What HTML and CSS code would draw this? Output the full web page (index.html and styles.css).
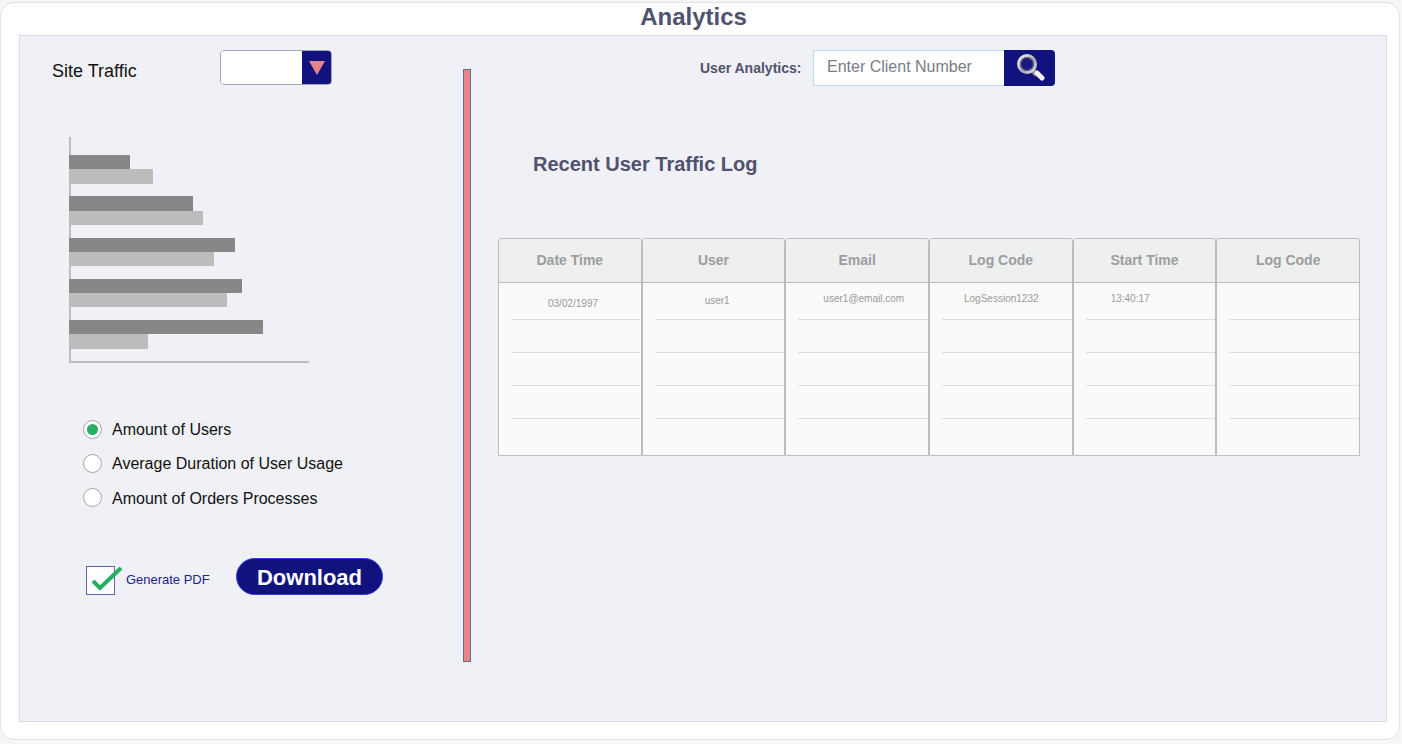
FILE: index.html
```html
<!DOCTYPE html>
<html lang="en">
<head>
    <meta charset="UTF-8">
    <meta name="viewport" content="width=device-width, initial-scale=1.0">
    <title>Analytics</title>
    <link rel="stylesheet" href="styles.css">
</head>

<body>
    <div class="card">
        <h1 class="page_title">Analytics</h1>
        <div class="panel">

            <div class="left_col">
                <div class="traffic_row">
                    <span class="traffic_label">Site Traffic</span>
                    <div class="dropdown">
                        <div class="dropdown_value"></div>
                        <div class="dropdown_arrow"><span class="triangle"></span></div>
                    </div>
                </div>

                <div class="chart">
                    <div class="bar_group">
                        <div class="bar bar_dark" style="width: 61px"></div>
                        <div class="bar bar_light" style="width: 84px"></div>
                    </div>
                    <div class="bar_group">
                        <div class="bar bar_dark" style="width: 124px"></div>
                        <div class="bar bar_light" style="width: 134px"></div>
                    </div>
                    <div class="bar_group">
                        <div class="bar bar_dark" style="width: 166px"></div>
                        <div class="bar bar_light" style="width: 145px"></div>
                    </div>
                    <div class="bar_group">
                        <div class="bar bar_dark" style="width: 173px"></div>
                        <div class="bar bar_light" style="width: 158px"></div>
                    </div>
                    <div class="bar_group">
                        <div class="bar bar_dark" style="width: 194px"></div>
                        <div class="bar bar_light" style="width: 79px"></div>
                    </div>
                </div>

                <div class="radio_list">
                    <div class="radio_row"><span class="radio radio_on"></span>Amount of Users</div>
                    <div class="radio_row"><span class="radio"></span>Average Duration of User Usage</div>
                    <div class="radio_row"><span class="radio"></span>Amount of Orders Processes</div>
                </div>

                <div class="download_row">
                    <div class="checkbox">
                        <svg class="check_mark" width="40" height="34" viewBox="0 0 40 34">
                            <path d="M8 17 L15 24 L36 4" fill="none" stroke="#27ae60" stroke-width="4"/>
                        </svg>
                    </div>
                    <span class="pdf_label">Generate PDF</span>
                    <button class="download_btn">Download</button>
                </div>
            </div>

            <div class="divider"></div>

            <div class="right_col">
                <div class="search_row">
                    <span class="search_label">User Analytics:</span>
                    <input type="text" class="search_input" placeholder="Enter Client Number">
                    <button class="search_btn">
                        <svg width="30" height="30" viewBox="0 0 30 30">
                            <defs>
                                <linearGradient id="ring_grad" x1="0" y1="0" x2="1" y2="1">
                                    <stop offset="0" stop-color="#f4f4f4"/>
                                    <stop offset="0.6" stop-color="#a8a8ae"/>
                                    <stop offset="1" stop-color="#ececec"/>
                                </linearGradient>
                            </defs>
                            <line x1="18" y1="18" x2="22" y2="22" stroke="#8a8a8a" stroke-width="5"/>
                            <line x1="22" y1="20" x2="27" y2="25" stroke="#f4f4f4" stroke-width="5" stroke-linecap="round"/>
                            <circle cx="12" cy="11" r="8.5" fill="#1a1a80" stroke="url(#ring_grad)" stroke-width="3"/>
                            <circle cx="12" cy="11" r="6.5" fill="none" stroke="#6f6f7c" stroke-width="1.2"/>
                        </svg>
                    </button>
                </div>

                <h2 class="log_title">Recent User Traffic Log</h2>

                <div class="log_table">
                    <div class="log_col">
                        <div class="log_head">Date Time</div>
                        <div class="log_cell log_first"><span class="cell_text cell_date">03/02/1997</span></div>
                        <div class="log_cell"></div>
                        <div class="log_cell"></div>
                        <div class="log_cell"></div>
                    </div>
                    <div class="log_col">
                        <div class="log_head">User</div>
                        <div class="log_cell log_first"><span class="cell_text cell_user">user1</span></div>
                        <div class="log_cell"></div>
                        <div class="log_cell"></div>
                        <div class="log_cell"></div>
                    </div>
                    <div class="log_col">
                        <div class="log_head">Email</div>
                        <div class="log_cell log_first"><span class="cell_text cell_email">user1@email.com</span></div>
                        <div class="log_cell"></div>
                        <div class="log_cell"></div>
                        <div class="log_cell"></div>
                    </div>
                    <div class="log_col">
                        <div class="log_head">Log Code</div>
                        <div class="log_cell log_first"><span class="cell_text cell_code">LogSession1232</span></div>
                        <div class="log_cell"></div>
                        <div class="log_cell"></div>
                        <div class="log_cell"></div>
                    </div>
                    <div class="log_col">
                        <div class="log_head">Start Time</div>
                        <div class="log_cell log_first"><span class="cell_text cell_time">13:40:17</span></div>
                        <div class="log_cell"></div>
                        <div class="log_cell"></div>
                        <div class="log_cell"></div>
                    </div>
                    <div class="log_col">
                        <div class="log_head">Log Code</div>
                        <div class="log_cell log_first"></div>
                        <div class="log_cell"></div>
                        <div class="log_cell"></div>
                        <div class="log_cell"></div>
                    </div>
                </div>
            </div>

        </div>
    </div>
</body>
</html>
```

FILE: styles.css
```css
body{
    margin: 0;
    background-color: #f6f6f6;
    font-family: "Liberation Sans", Arial, sans-serif;
}

.card{
    box-sizing: border-box;
    width: 1400px;
    height: 738px;
    margin-top: 2px;
    padding: 0 12px 0 19px;
    background-color: #fff;
    border: 1px solid #e8dfdf;
    border-radius: 14px;
}

.page_title{
    height: 32px;
    margin: 0;
    padding-right: 20px;
    text-align: center;
    font-size: 24px;
    line-height: 28px;
    font-weight: bold;
    color: #50526e;
}

/* main grey area */
.panel{
    box-sizing: border-box;
    display: flex;
    align-items: flex-start;
    height: 687px;
    background-color: #f0f1f6;
    border: 1px solid #d9d9e3;
    margin-left: -1px;
}

.left_col{
    box-sizing: border-box;
    width: 443px;
    padding-left: 32px;
}

.traffic_row{
    display: flex;
    align-items: center;
    margin-top: 14px;
}

.traffic_label{
    width: 168px;
    padding-top: 8px;
    font-size: 18px;
    color: #111;
}

.dropdown{
    box-sizing: border-box;
    display: flex;
    width: 112px;
    height: 35px;
    border: 1px solid #a3a7b3;
    border-radius: 4px;
    overflow: hidden;
}

.dropdown_value{
    flex: 1;
    background-color: #fff;
}

.dropdown_arrow{
    display: flex;
    align-items: center;
    justify-content: center;
    width: 29px;
    background-color: #12127f;
}

.triangle{
    width: 0;
    height: 0;
    border-left: 8px solid transparent;
    border-right: 8px solid transparent;
    border-top: 14px solid #e5848a;
}

.chart{
    box-sizing: border-box;
    width: 240px;
    height: 226px;
    margin: 52px 0 0 17px;
    padding-top: 18px;
    border-left: 2px solid #bdbdc2;
    border-bottom: 2px solid #bdbdc2;
    display: flex;
    flex-direction: column;
    gap: 12.75px;
}

.bar{
    height: 14.25px;
    margin-left: -2px;
}

.bar_dark{
    background-color: #878787;
}

.bar_light{
    background-color: #bcbcbc;
}

.radio_list{
    display: flex;
    flex-direction: column;
    gap: 14.4px;
    margin: 56px 0 0 31px;
}

.radio_row{
    box-sizing: border-box;
    display: flex;
    align-items: center;
    gap: 10px;
    height: 20px;
    padding-top: 2px;
    font-size: 16px;
    color: #111;
}

.radio{
    box-sizing: border-box;
    display: flex;
    align-items: center;
    justify-content: center;
    width: 19px;
    height: 19px;
    margin-top: -2px;
    background-color: #fff;
    border: 1px solid #a5a5a5;
    border-radius: 50%;
}

.radio_on::after{
    content: '';
    width: 11px;
    height: 11px;
    background-color: #27ae60;
    border-radius: 50%;
}

.download_row{
    display: flex;
    align-items: center;
    margin: 50px 0 0 34px;
}

.checkbox{
    position: relative;
    box-sizing: border-box;
    align-self: flex-start;
    flex: none;
    width: 29px;
    height: 29px;
    margin-top: 8px;
    background-color: #fff;
    border: 1.5px solid #6262b4;
}

.check_mark{
    position: absolute;
    top: -3px;
    left: -2px;
}

.pdf_label{
    width: 110px;
    margin: 7px 0 0 11px;
    font-size: 13px;
    letter-spacing: -0.02px;
    color: #22228f;
}

.download_btn{
    box-sizing: border-box;
    width: 147px;
    height: 37px;
    padding-top: 4px;
    background-color: #12127f;
    border: 1px solid #3a3ae0;
    border-radius: 19px;
    font-family: "Liberation Sans", Arial, sans-serif;
    font-size: 22px;
    font-weight: bold;
    color: #fff;
}

.divider{
    box-sizing: border-box;
    width: 8px;
    height: 593px;
    margin-top: 33px;
    background-color: #e78589;
    border: 1px solid #5f7088;
}

.right_col{
    flex: 1;
}

.search_row{
    display: flex;
    align-items: center;
    margin: 14px 0 0 229px;
}

.search_label{
    width: 113px;
    font-size: 14px;
    font-weight: bold;
    color: #50526e;
}

.search_input{
    box-sizing: border-box;
    width: 191px;
    height: 36px;
    padding: 0 0 3px 13px;
    background-color: #fff;
    border: 1px solid #bddcf5;
    border-right: 0;
    outline: none;
    font-family: "Liberation Sans", Arial, sans-serif;
    font-size: 16px;
}

.search_input::placeholder{
    color: #777e88;
    opacity: 1;
}

.search_btn{
    display: flex;
    align-items: center;
    justify-content: center;
    width: 51px;
    height: 36px;
    padding: 0;
    background-color: #12127f;
    border: 0;
    border-radius: 0 4px 4px 0;
}

.log_title{
    margin: 66px 0 0 62px;
    font-size: 20px;
    line-height: 24px;
    font-weight: bold;
    color: #50526e;
}

.log_table{
    display: grid;
    grid-template-columns: repeat(6, 1fr);
    width: 862px;
    margin: 62px 0 0 27px;
}

.log_col{
    box-sizing: border-box;
    height: 218px;
    background-color: #fafafa;
    border: 1px solid #bcbcbc;
    border-radius: 3px 3px 0 0;
}

.log_head{
    box-sizing: border-box;
    height: 44px;
    background-color: #eef0ef;
    border-bottom: 1px solid #bcbcbc;
    border-radius: 3px 3px 0 0;
    text-align: center;
    font-size: 14px;
    font-weight: bold;
    line-height: 43px;
    color: #9b9d9f;
}

.log_cell{
    box-sizing: border-box;
    height: 33px;
    margin-left: 12px;
    border-bottom: 1px solid #dcdcdc;
}

.log_first{
    height: 37px;
}

.cell_text{
    display: block;
    font-size: 10px;
    line-height: 12px;
    color: #999;
}

.cell_date{
    padding: 15px 0 0 37px;
}

.cell_user{
    padding: 12px 0 0 50px;
}

.cell_email{
    padding: 10px 0 0 25px;
}

.cell_code{
    padding: 10px 0 0 22px;
}

.cell_time{
    padding: 10px 0 0 25px;
}
```
